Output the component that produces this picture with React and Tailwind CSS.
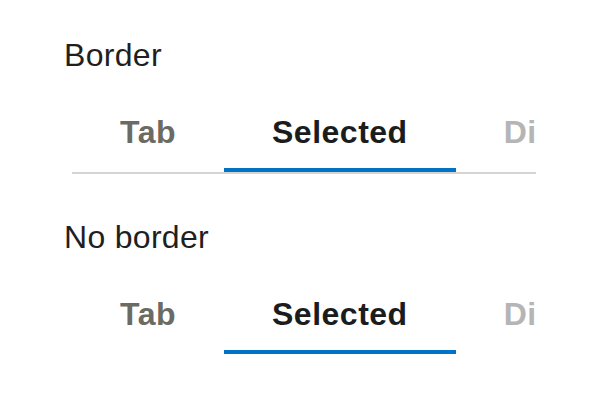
import React, { useState } from "react";

const tabs = [
  { id: "tab", label: "Tab" },
  { id: "selected", label: "Selected" },
  { id: "disabled", label: "Disabled", disabled: true },
];

const TabBar = ({ border }) => {
  const [active, setActive] = useState("selected");
  return (
    <div
      className={
        "ml-2 flex overflow-hidden whitespace-nowrap " +
        (border ? "border-b-2 border-[#d6d3d0]" : "border-b-2 border-transparent")
      }
    >
      {tabs.map((t) => {
        const isActive = t.id === active;
        return (
          <button
            key={t.id}
            disabled={t.disabled}
            onClick={() => setActive(t.id)}
            className={
              "flex-none -mb-[2px] px-12 pt-6 pb-[17px] border-b-[6px] text-[32px] leading-[38px] font-bold tracking-[0.5px] " +
              (isActive
                ? "border-[#0073c6] text-[#1c1c1c]"
                : t.disabled
                ? "border-transparent text-[#b5b5b5]"
                : "border-transparent text-[#6b6a63]")
            }
          >
            {t.label}
          </button>
        );
      })}
    </div>
  );
};

const App = () => {
  return (
    <div
      className="w-[600px] h-[400px] bg-white px-16 pt-9"
      style={{ fontFamily: '"Liberation Sans", Arial, sans-serif' }}
    >
      <div className="text-[32px] leading-[38px] tracking-[0.3px] text-[#1f1f1f]">Border</div>
      <div className="mt-[15px]">
        <TabBar border />
      </div>
      <div className="mt-[44px] text-[32px] leading-[38px] tracking-[0.3px] text-[#1f1f1f]">No border</div>
      <div className="mt-[15px]">
        <TabBar border={false} />
      </div>
    </div>
  );
};

export default App;
